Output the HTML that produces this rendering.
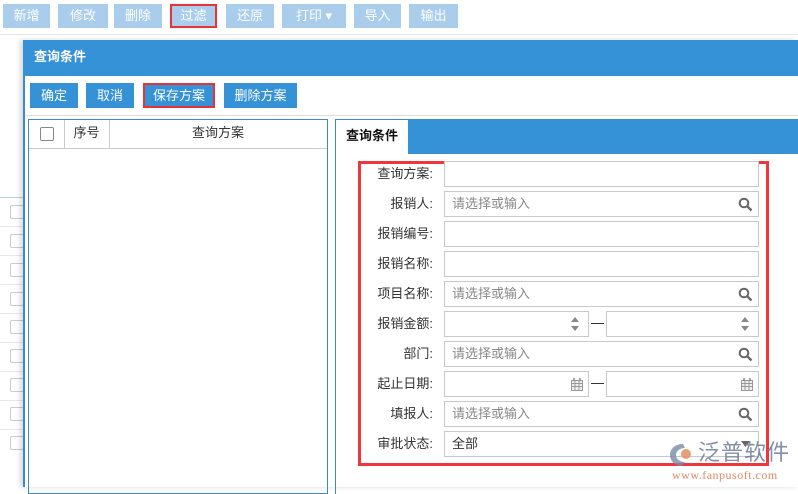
<!DOCTYPE html><html><head><meta charset="utf-8"><style>
*{box-sizing:border-box;margin:0;padding:0}
body{width:798px;height:487px;overflow:hidden;background:#fff;font-family:"Liberation Sans","Noto Sans CJK SC",sans-serif;font-size:13px;position:relative;color:#333}
.a{position:absolute}
.tb{position:absolute;top:4px;height:24px;background:#a9cdea;color:#fff;font-size:13px;line-height:24px;text-align:center}
.bb{position:absolute;top:83px;height:25px;background:#3592d6;color:#fff;line-height:25px;text-align:center}
.lab{position:absolute;left:340px;width:93px;text-align:right;color:#333;font-size:13px;line-height:26px}
.in{position:absolute;height:26px;border:1px solid #c8c8c8;background:#fff;color:#888;padding-left:7px;line-height:24px}
.ic{position:absolute;right:5px;top:5px}
.cb{position:absolute;left:10px;width:14px;height:14px;border:1px solid #ccc;border-radius:2px}
</style></head><body>
<div class="tb" style="left:3px;width:47px">新增</div>
<div class="tb" style="left:58px;width:50px">修改</div>
<div class="tb" style="left:114px;width:48px">删除</div>
<div class="tb" style="left:170px;width:47px;border:2px solid #e8323a;line-height:20px">过滤</div>
<div class="tb" style="left:226px;width:48px">还原</div>
<div class="tb" style="left:282px;width:64px">打印 ▾</div>
<div class="tb" style="left:354px;width:47px">导入</div>
<div class="tb" style="left:409px;width:49px">输出</div>
<div class="a" style="left:0;top:34px;width:798px;height:1px;background:#e6e6e6"></div>
<div class="a" style="left:0;top:197px;width:24px;height:1px;background:#b8cfe0"></div>
<div class="a" style="left:0;top:198px;width:24px;height:260px;background:repeating-linear-gradient(#fff 0,#fff 28px,#e8e8e8 28px,#e8e8e8 29px)"></div>
<div class="cb" style="top:205px"></div><div class="cb" style="top:234px"></div><div class="cb" style="top:263px"></div><div class="cb" style="top:292px"></div><div class="cb" style="top:320px"></div><div class="cb" style="top:349px"></div><div class="cb" style="top:378px"></div><div class="cb" style="top:407px"></div><div class="cb" style="top:436px"></div>
<div class="a" style="left:23px;top:40px;width:775px;height:447px;background:#fff;border-left:2px solid #3a8bcc;box-shadow:-3px 0 5px rgba(0,0,0,.15)"></div>
<div class="a" style="left:23px;top:40px;width:775px;height:36px;background:#3592d6;color:#fff;font-weight:bold;font-size:13px;line-height:34px;padding-left:11px">查询条件</div>
<div class="bb" style="left:30px;width:48px">确定</div>
<div class="bb" style="left:86px;width:48px">取消</div>
<div class="bb" style="left:143px;width:72px;border:2px solid #e8323a;line-height:21px">保存方案</div>
<div class="bb" style="left:224px;width:73px">删除方案</div>
<div class="a" style="left:25px;top:115px;width:773px;height:1px;background:#ddd"></div>
<div class="a" style="left:28px;top:119px;width:300px;height:375px;border:1px solid #3a8bcc"></div>
<div class="a" style="left:29px;top:148px;width:298px;height:1px;background:#ccc"></div>
<div class="a" style="left:64px;top:120px;width:1px;height:28px;background:#ccc"></div>
<div class="a" style="left:109px;top:120px;width:1px;height:28px;background:#ccc"></div>
<div class="a" style="left:40px;top:127px;width:14px;height:14px;border:1px solid #888;border-radius:2px"></div>
<div class="a" style="left:64px;top:120px;width:45px;line-height:26px;text-align:center">序号</div>
<div class="a" style="left:109px;top:120px;width:218px;line-height:26px;text-align:center">查询方案</div>
<div class="a" style="left:335px;top:119px;width:463px;height:375px;border-left:1px solid #3a8bcc;border-top:1px solid #3a8bcc"></div>
<div class="a" style="left:408px;top:120px;width:390px;height:34px;background:#3592d6"></div>
<div class="a" style="left:336px;top:120px;width:72px;line-height:32px;text-align:center;font-weight:bold;color:#111">查询条件</div>
<div class="a" style="left:358px;top:161px;width:411px;height:305px;border:3px solid #f0353c"></div>
<div class="lab" style="top:161px">查询方案:</div><div class="in" style="left:444px;top:161px;width:315px"></div>
<div class="lab" style="top:191px">报销人:</div><div class="in" style="left:444px;top:191px;width:315px">请选择或输入<svg class="ic" width="15" height="15" viewBox="0 0 15 15"><circle cx="6" cy="6" r="4.3" fill="none" stroke="#666" stroke-width="2"/><path d="M9.2 9.2L13.5 13.5" stroke="#666" stroke-width="2.4"/></svg></div>
<div class="lab" style="top:221px">报销编号:</div><div class="in" style="left:444px;top:221px;width:315px"></div>
<div class="lab" style="top:251px">报销名称:</div><div class="in" style="left:444px;top:251px;width:315px"></div>
<div class="lab" style="top:281px">项目名称:</div><div class="in" style="left:444px;top:281px;width:315px">请选择或输入<svg class="ic" width="15" height="15" viewBox="0 0 15 15"><circle cx="6" cy="6" r="4.3" fill="none" stroke="#666" stroke-width="2"/><path d="M9.2 9.2L13.5 13.5" stroke="#666" stroke-width="2.4"/></svg></div>
<div class="lab" style="top:311px">报销金额:</div>
<div class="in" style="left:444px;top:311px;width:145px"><svg class="ic" style="top:4px;right:9px" width="8" height="16"><path d="M0 6L4 1L8 6Z M0 10L4 15L8 10Z" fill="#888"/></svg></div>
<div class="a" style="left:591px;top:323px;width:13px;height:1px;background:#333"></div>
<div class="in" style="left:606px;top:311px;width:153px"><svg class="ic" style="top:4px;right:9px" width="8" height="16"><path d="M0 6L4 1L8 6Z M0 10L4 15L8 10Z" fill="#888"/></svg></div>
<div class="lab" style="top:341px">部门:</div><div class="in" style="left:444px;top:341px;width:315px">请选择或输入<svg class="ic" width="15" height="15" viewBox="0 0 15 15"><circle cx="6" cy="6" r="4.3" fill="none" stroke="#666" stroke-width="2"/><path d="M9.2 9.2L13.5 13.5" stroke="#666" stroke-width="2.4"/></svg></div>
<div class="lab" style="top:371px">起止日期:</div>
<div class="in" style="left:444px;top:371px;width:145px"><svg class="ic" style="right:5px;top:6px" width="12" height="13"><rect x="0.5" y="2.5" width="11" height="10" fill="#eee" stroke="#999"/><path d="M0 5.5H12M0 8.5H12M4 3V13M8 3V13" stroke="#999"/><path d="M3 0V3M9 0V3" stroke="#888" stroke-width="1.5"/></svg></div>
<div class="a" style="left:591px;top:383px;width:13px;height:1px;background:#333"></div>
<div class="in" style="left:606px;top:371px;width:153px"><svg class="ic" style="right:5px;top:6px" width="12" height="13"><rect x="0.5" y="2.5" width="11" height="10" fill="#eee" stroke="#999"/><path d="M0 5.5H12M0 8.5H12M4 3V13M8 3V13" stroke="#999"/><path d="M3 0V3M9 0V3" stroke="#888" stroke-width="1.5"/></svg></div>
<div class="lab" style="top:401px">填报人:</div><div class="in" style="left:444px;top:401px;width:315px">请选择或输入<svg class="ic" width="15" height="15" viewBox="0 0 15 15"><circle cx="6" cy="6" r="4.3" fill="none" stroke="#666" stroke-width="2"/><path d="M9.2 9.2L13.5 13.5" stroke="#666" stroke-width="2.4"/></svg></div>
<div class="lab" style="top:431px">审批状态:</div><div class="in" style="left:444px;top:431px;width:315px;color:#333">全部<svg class="ic" style="top:9px;right:8px" width="9" height="6"><path d="M0 0H9L4.5 6Z" fill="#666"/></svg></div>
<svg class="a" style="left:669px;top:443px" width="26" height="24" viewBox="0 0 26 24"><path d="M14 1C6 1 1 6 1 12c0 6 5 11 12 11l3-4c-5 0-9-3-9-7s4-7 9-7z" fill="#7b8aa3" opacity=".8"/><circle cx="17" cy="11" r="5" fill="#e39060" opacity=".85"/></svg>
<div class="a" style="left:698px;top:440px;font-size:22px;color:#6e7c96;letter-spacing:1px;line-height:26px;opacity:.85">泛普软件</div>
<div class="a" style="left:672px;top:468px;font-size:12px;line-height:14px;color:#e08a66;font-family:'Liberation Serif',serif;letter-spacing:.5px">www.fanpusoft.com</div>
</body></html>
